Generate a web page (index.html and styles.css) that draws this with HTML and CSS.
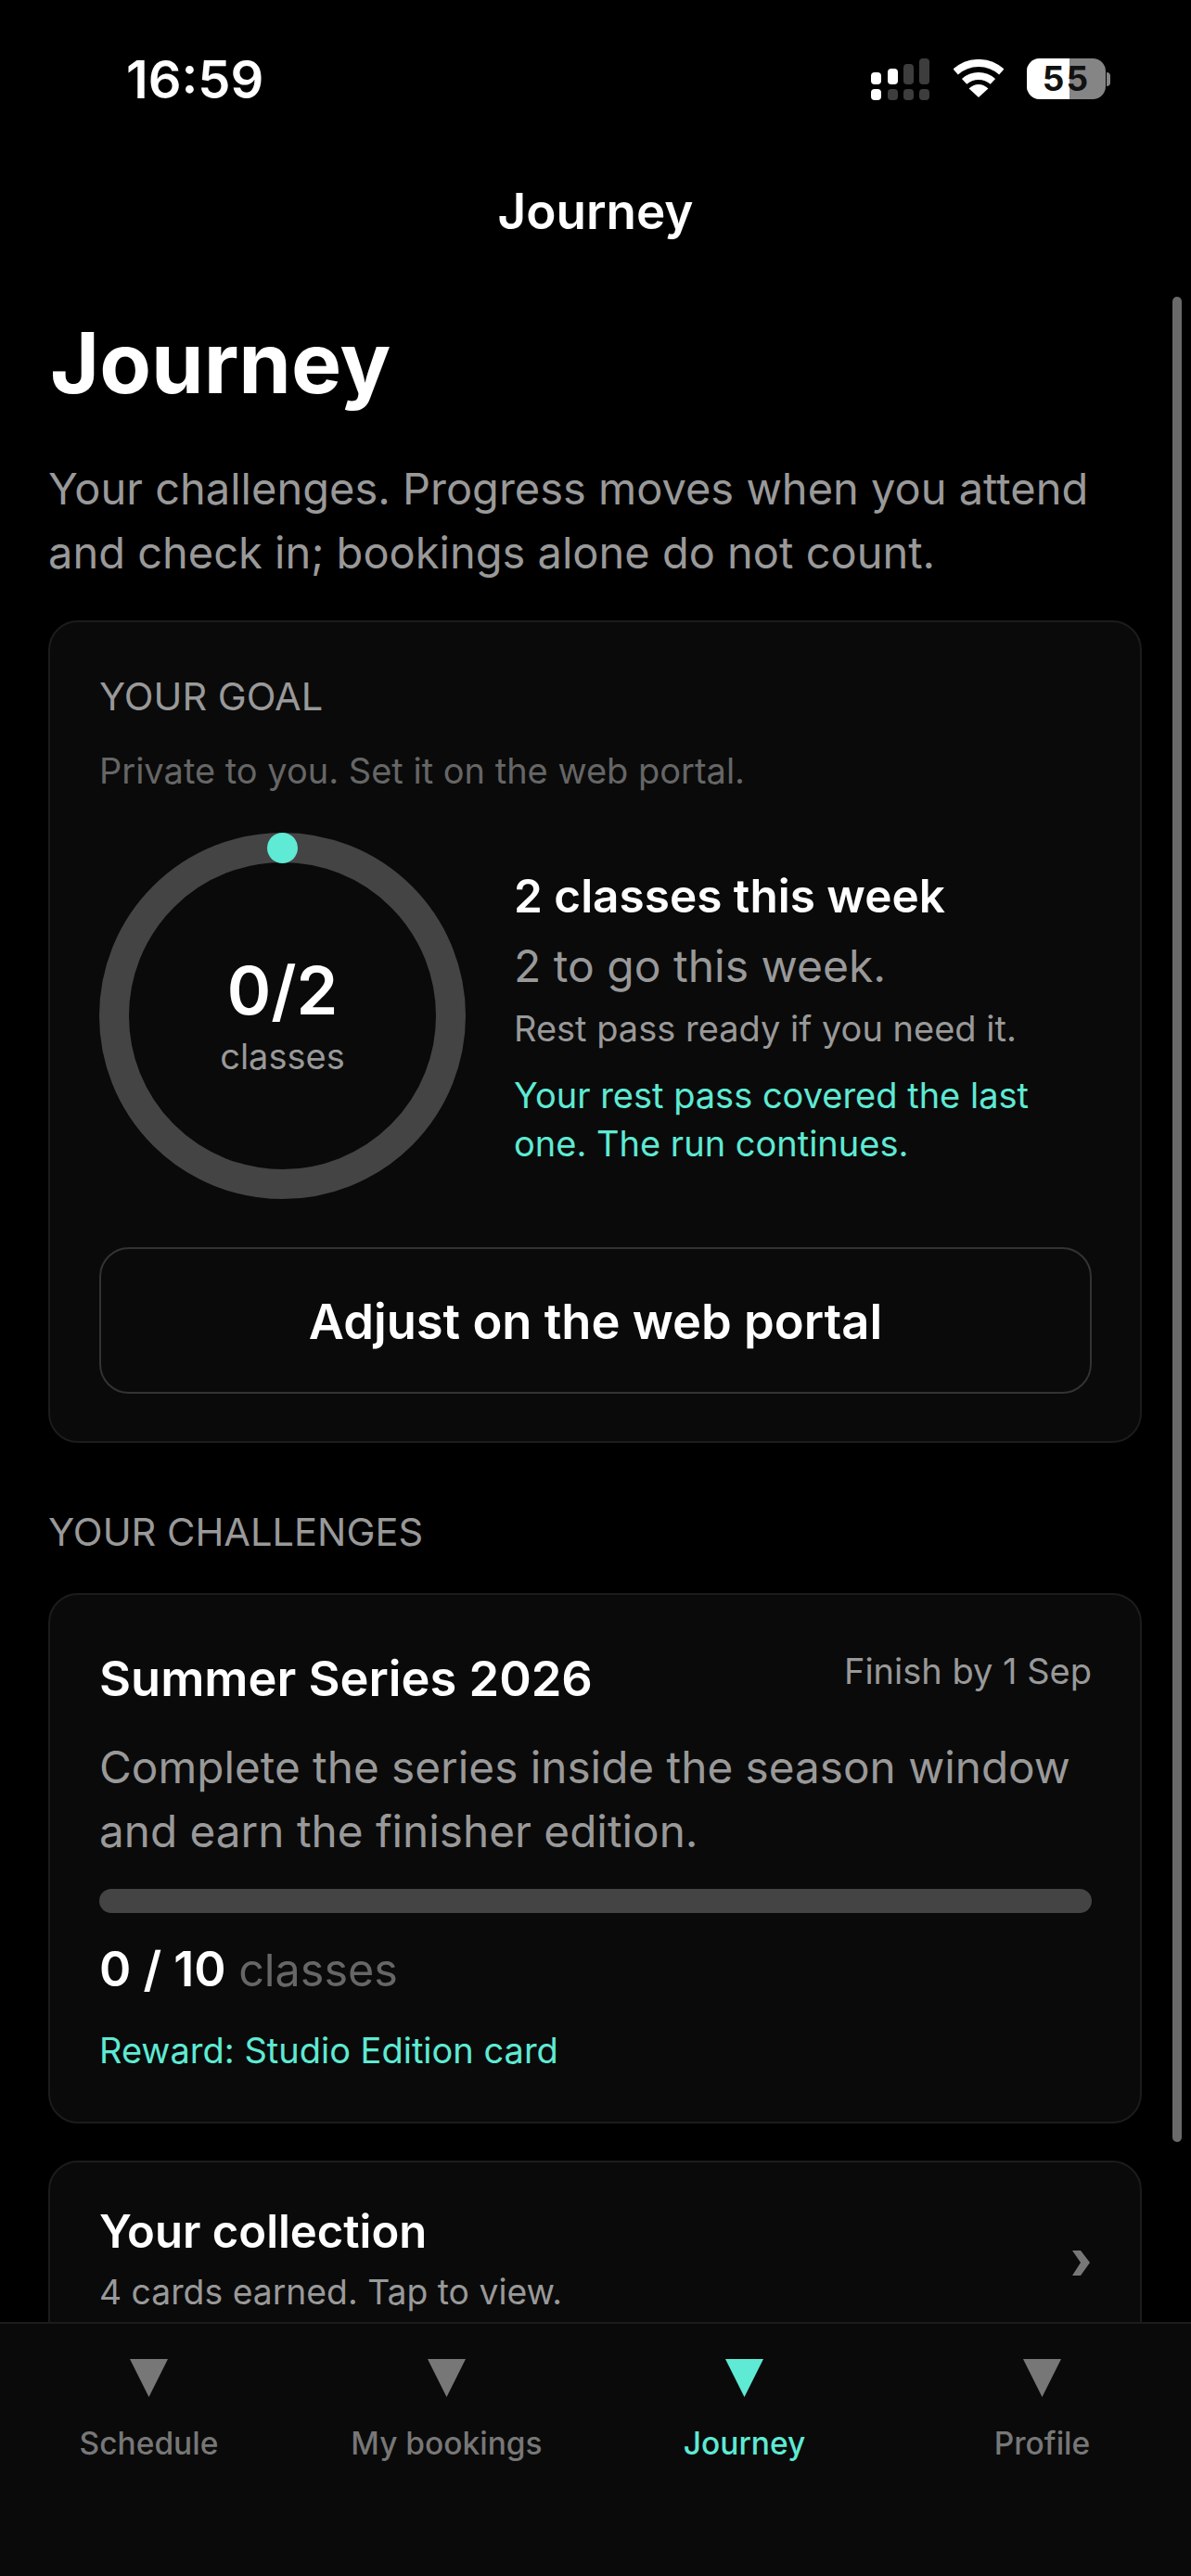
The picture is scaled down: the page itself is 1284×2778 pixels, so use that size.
FILE: index.html
```html
<!DOCTYPE html>
<html lang="en">
<head>
  <meta charset="UTF-8">
  <title>Journey</title>
  <link rel="stylesheet" href="styles.css">
</head>
<body>
  <div class="screen">
    <div class="status">
      <span class="time">16:59</span>
      <div class="status-icons">
        <svg class="signal" width="64" height="45" viewBox="0 0 64 45">
          <rect x="0" y="15" width="11" height="13" rx="4" fill="#fff"/>
          <rect x="18" y="11" width="11" height="17" rx="4" fill="#fff"/>
          <rect x="35" y="6" width="11" height="22" rx="4" fill="#3d3d3d"/>
          <rect x="52" y="0" width="11" height="28" rx="4" fill="#3d3d3d"/>
          <rect x="0" y="33" width="11" height="12" rx="4" fill="#fff"/>
          <rect x="18" y="33" width="11" height="12" rx="4" fill="#3d3d3d"/>
          <rect x="35" y="33" width="11" height="12" rx="4" fill="#3d3d3d"/>
          <rect x="52" y="33" width="11" height="12" rx="4" fill="#3d3d3d"/>
        </svg>
        <svg class="wifi" width="54" height="41" viewBox="0 0 54 41">
          <path d="M2.2 13.5A37 37 0 0 1 51.8 13.5" fill="none" stroke="#fff" stroke-width="8"/>
          <path d="M11.6 23.9A23 23 0 0 1 42.4 23.9" fill="none" stroke="#fff" stroke-width="8"/>
          <path d="M27 41L16.6 31.6A14 14 0 0 1 37.4 31.6Z" fill="#fff"/>
        </svg>
        <div class="battery">
          <div class="battery-body"><span class="battery-level"></span><span class="battery-num">55</span></div>
          <span class="battery-tip"></span>
        </div>
      </div>
    </div>

    <div class="navbar">Journey</div>

    <div class="content">
      <span class="scrollbar"></span>
      <h1>Journey</h1>
      <p class="lead">Your challenges. Progress moves when you attend and check in; bookings alone do not count.</p>

      <section class="card goal-card">
        <div class="goal-label">YOUR GOAL</div>
        <div class="goal-note">Private to you. Set it on the web portal.</div>
        <div class="goal-row">
          <div class="ring">
            <span class="ring-dot"></span>
            <div class="ring-value">0/2</div>
            <div class="ring-unit">classes</div>
          </div>
          <div class="goal-info">
            <div class="goal-title">2 classes this week</div>
            <div class="goal-left">2 to go this week.</div>
            <div class="goal-rest">Rest pass ready if you need it.</div>
            <div class="goal-covered">Your rest pass covered the last one. The run continues.</div>
          </div>
        </div>
        <div class="portal-btn">Adjust on the web portal</div>
      </section>

      <h2 class="section-label">YOUR CHALLENGES</h2>

      <section class="card challenge-card">
        <div class="challenge-head">
          <div class="challenge-title">Summer Series 2026</div>
          <div class="challenge-date">Finish by 1 Sep</div>
        </div>
        <p class="challenge-text">Complete the series inside the season window and earn the finisher edition.</p>
        <div class="progress"></div>
        <div class="challenge-count"><strong>0 / 10</strong> classes</div>
        <div class="challenge-reward">Reward: Studio Edition card</div>
      </section>

      <section class="card collection-card">
        <div>
          <div class="collection-title">Your collection</div>
          <div class="collection-note">4 cards earned. Tap to view.</div>
        </div>
        <svg class="chevron" width="19" height="27" viewBox="0 0 19 27">
          <polygon points="0,0 9,0 19,13 9,27 0,27 9,13" fill="#777"/>
        </svg>
      </section>
    </div>

    <nav class="tabbar">
      <div class="tab">
        <svg width="41" height="41" viewBox="0 0 41 41"><polygon points="0,0 41,0 20.5,41"/></svg>
        <span>Schedule</span>
      </div>
      <div class="tab">
        <svg width="41" height="41" viewBox="0 0 41 41"><polygon points="0,0 41,0 20.5,41"/></svg>
        <span>My bookings</span>
      </div>
      <div class="tab active">
        <svg width="41" height="41" viewBox="0 0 41 41"><polygon points="0,0 41,0 20.5,41"/></svg>
        <span>Journey</span>
      </div>
      <div class="tab">
        <svg width="41" height="41" viewBox="0 0 41 41"><polygon points="0,0 41,0 20.5,41"/></svg>
        <span>Profile</span>
      </div>
    </nav>
  </div>
</body>
</html>
```

FILE: styles.css
```css
* {
  box-sizing: border-box;
}

body {
  margin: 0;
  background: #000;
  font-family: "Inter", "Liberation Sans", sans-serif;
  color: #fff;
}

.screen {
  width: 1284px;
  height: 2778px;
  display: flex;
  flex-direction: column;
  overflow: hidden;
}

/* status bar */
.status {
  height: 170px;
  flex: none;
  display: flex;
  justify-content: space-between;
  align-items: flex-start;
  padding: 54px 87px 0 136px;
}

.time {
  font-size: 56px;
  line-height: 64px;
  font-weight: 600;
}

.status-icons {
  display: flex;
  align-items: flex-start;
  gap: 25px;
  padding-top: 9px;
}

.wifi {
  margin-top: 1px;
}

.battery {
  display: flex;
  align-items: center;
  gap: 1px;
}

.battery-body {
  position: relative;
  width: 85px;
  height: 44px;
  border-radius: 14px;
  background: #858585;
  overflow: hidden;
  text-align: center;
}

.battery-level {
  position: absolute;
  left: 0;
  top: 0;
  bottom: 0;
  width: 46px;
  background: #fff;
}

.battery-num {
  position: relative;
  font-size: 37px;
  line-height: 44px;
  font-weight: 700;
  letter-spacing: 2px;
  color: #111;
}

.battery-tip {
  width: 4px;
  height: 15px;
  border-radius: 0 8px 8px 0;
  background: #858585;
}

.navbar {
  height: 116px;
  flex: none;
  text-align: center;
  font-size: 53px;
  line-height: 116px;
  font-weight: 600;
}

/* scrolling area */
.content {
  position: relative;
  flex: 1;
  min-height: 0;
  overflow: hidden;
  padding: 0 53px 0 52px;
}

.scrollbar {
  position: absolute;
  right: 10px;
  top: 34px;
  width: 10px;
  height: 1990px;
  border-radius: 5px;
  background: #6a6a6a;
}

h1 {
  margin: 52px 0 0 2px;
  font-size: 91px;
  line-height: 106px;
  font-weight: 700;
}

.lead {
  margin: 48px 0 0;
  font-size: 47px;
  line-height: 69px;
  color: #999;
}

.card {
  border: 2px solid #1c1c1c;
  border-radius: 32px;
  background: #0a0a0a;
  margin-top: 39px;
  padding: 0 52px 0 53px;
}

.goal-card {
  height: 887px;
  padding-top: 54px;
}

.goal-label {
  font-size: 41.5px;
  line-height: 52px;
  color: #999;
}

.goal-note {
  margin-top: 28px;
  font-size: 38px;
  line-height: 52px;
  color: #666;
}

.goal-row {
  display: flex;
  align-items: center;
  gap: 52px;
  margin-top: 41px;
}

.ring {
  position: relative;
  flex: none;
  width: 395px;
  height: 395px;
  border: 32px solid #444;
  border-radius: 50%;
  padding-bottom: 2px;
  display: flex;
  flex-direction: column;
  align-items: center;
  justify-content: center;
}

.ring-dot {
  position: absolute;
  top: -32px;
  left: 50%;
  width: 33px;
  height: 33px;
  margin-left: -16.5px;
  border-radius: 50%;
  background: #5eead4;
}

.ring-value {
  font-size: 72px;
  line-height: 84px;
  font-weight: 600;
}

.ring-unit {
  margin-top: 4px;
  font-size: 38px;
  line-height: 50px;
  color: #999;
}

.goal-info {
  flex: 1;
  padding-top: 3px;
}

.goal-title {
  font-size: 49.5px;
  line-height: 62px;
  font-weight: 600;
}

.goal-left {
  margin-top: 14px;
  font-size: 48px;
  line-height: 62px;
  color: #999;
}

.goal-rest {
  margin-top: 10px;
  font-size: 38px;
  line-height: 52px;
  color: #999;
}

.goal-covered {
  margin-top: 20px;
  font-size: 38px;
  line-height: 52px;
  color: #5eead4;
}

.portal-btn {
  margin-top: 52px;
  height: 158px;
  border: 2px solid #333;
  border-radius: 32px;
  text-align: center;
  font-size: 52.5px;
  line-height: 156px;
  font-weight: 600;
}

.section-label {
  margin: 70px 0 0;
  font-size: 41.6px;
  line-height: 52px;
  font-weight: 400;
  color: #999;
}

.challenge-card {
  height: 572px;
  margin-top: 40px;
  padding-top: 58px;
}

.challenge-head {
  display: flex;
  justify-content: space-between;
  align-items: flex-start;
}

.challenge-title {
  font-size: 52.4px;
  line-height: 64px;
  font-weight: 600;
}

.challenge-date {
  margin-top: -2px;
  font-size: 38px;
  line-height: 52px;
  color: #999;
}

.challenge-text {
  margin: 30px 0 0;
  font-size: 47.7px;
  line-height: 69px;
  color: #999;
}

.progress {
  margin-top: 27px;
  height: 26px;
  border-radius: 13px;
  background: #444;
}

.challenge-count {
  margin-top: 30px;
  font-size: 48.5px;
  line-height: 62px;
  color: #666;
}

.challenge-count strong {
  font-size: 52px;
  font-weight: 600;
  color: #fff;
}

.challenge-reward {
  margin-top: 29px;
  font-size: 38px;
  line-height: 52px;
  color: #5eead4;
}

.collection-card {
  height: 260px;
  margin-top: 40px;
  padding-top: 44px;
  display: flex;
  justify-content: space-between;
  align-items: flex-start;
}

.collection-title {
  font-size: 49px;
  line-height: 62px;
  font-weight: 600;
}

.collection-note {
  margin-top: 8px;
  font-size: 37.3px;
  line-height: 52px;
  color: #999;
}

.chevron {
  margin: 51px 2px 0 0;
}

/* bottom tabs */
.tabbar {
  height: 274px;
  flex: none;
  display: grid;
  grid-template-columns: repeat(4, 1fr);
  border-top: 2px solid #1c1c1c;
  background: #0a0a0a;
}

.tab {
  display: flex;
  flex-direction: column;
  align-items: center;
  padding-top: 38px;
  color: #777;
  font-size: 33.5px;
  line-height: 44px;
  font-weight: 500;
}

.tab svg {
  fill: #777;
}

.tab span {
  margin-top: 28px;
}

.tab.active {
  color: #5eead4;
}

.tab.active svg {
  fill: #5eead4;
}
```
